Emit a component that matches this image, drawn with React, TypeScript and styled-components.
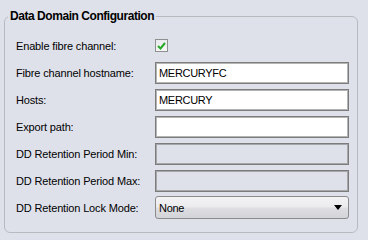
import * as React from 'react';
import styled, { createGlobalStyle } from 'styled-components';

const GlobalStyle = createGlobalStyle`
  html, body {
    margin: 0;
    padding: 0;
    background: #dfe1ea;
  }
  body {
    width: 368px;
    height: 240px;
    overflow: hidden;
    font-family: 'Liberation Sans', Arial, sans-serif;
    font-size: 11px;
    color: #000;
  }
`;

const Page = styled.div`
  padding: 8px 10px 0 4px;
`;

const Group = styled.fieldset`
  margin: 0;
  padding: 8px 8px 11px 11px;
  width: 354px;
  box-sizing: border-box;
  border: 1px solid #b9bac0;
  border-radius: 6px;
`;

const Legend = styled.legend`
  margin-left: -8px;
  padding: 0 2px;
  font-weight: bold;
  font-size: 12px;
  line-height: 16px;
  letter-spacing: -0.45px;
`;

const Row = styled.div`
  display: grid;
  grid-template-columns: 139px 194px;
  align-items: center;
  height: 27px;
`;

const Label = styled.label`
  letter-spacing: -0.15px;
  white-space: nowrap;
`;

const TextBox = styled.div<{ disabled?: boolean }>`
  box-sizing: border-box;
  height: 22px;
  border: 1px solid #7c7c7c;
  box-shadow: inset 0 0 0 1px ${({ disabled }) => (disabled ? '#a6a7ab' : '#b4b4b4')};
  background: ${({ disabled }) => (disabled ? '#dfe1ea' : '#ffffff')};
  padding: 0 3px;
  display: flex;
  align-items: center;
  font-size: 11px;
  letter-spacing: -0.3px;
`;

const Check = styled.span`
  box-sizing: border-box;
  width: 13px;
  height: 13px;
  border: 1px solid #8e8f8f;
  background: linear-gradient(#e9eaec, #f6f6f6);
  display: flex;
  align-items: center;
  justify-content: center;
`;

const Select = styled.div`
  box-sizing: border-box;
  height: 23px;
  border: 1px solid #8b8b8b;
  border-radius: 3px;
  background: linear-gradient(#f3f3f4 0%, #ececef 45%, #dedee2 55%, #d3d4d8 100%);
  display: flex;
  align-items: center;
  justify-content: space-between;
  padding: 0 6px 0 3px;
  letter-spacing: -0.3px;
`;

const fields: { label: string; value?: string; disabled?: boolean }[] = [
  { label: 'Fibre channel hostname:', value: 'MERCURYFC' },
  { label: 'Hosts:', value: 'MERCURY' },
  { label: 'Export path:', value: '' },
  { label: 'DD Retention Period Min:', disabled: true },
  { label: 'DD Retention Period Max:', disabled: true },
];

export default function App() {
  return (
    <Page>
      <GlobalStyle />
      <Group>
        <Legend>Data Domain Configuration</Legend>
        <Row>
          <Label>Enable fibre channel:</Label>
          <Check>
            <svg width="9" height="8" viewBox="0 0 9 8">
              <path d="M1 4 L3.5 6.5 L8 1" fill="none" stroke="#25a825" strokeWidth="2" />
            </svg>
          </Check>
        </Row>
        {fields.map(f => (
          <Row key={f.label}>
            <Label>{f.label}</Label>
            <TextBox disabled={f.disabled}>{f.value}</TextBox>
          </Row>
        ))}
        <Row>
          <Label>DD Retention Lock Mode:</Label>
          <Select>
            <span>None</span>
            <svg width="8" height="5" viewBox="0 0 8 5">
              <path d="M0 0 H8 L4 5 Z" fill="#000" />
            </svg>
          </Select>
        </Row>
      </Group>
    </Page>
  );
}
